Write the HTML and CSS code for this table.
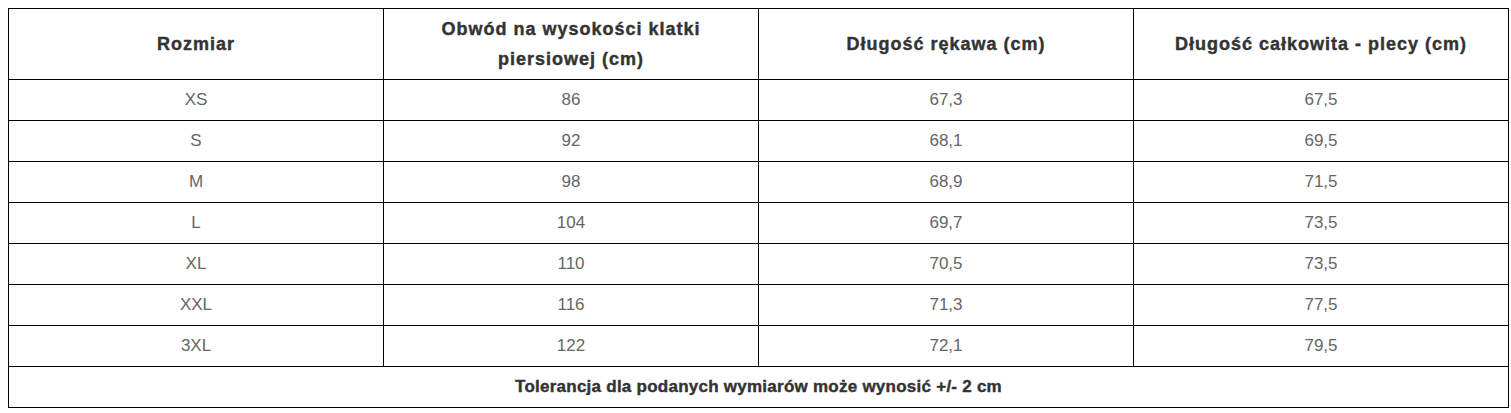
FILE: index.html
```html
<!DOCTYPE html>
<html lang="pl">
<head>
<meta charset="utf-8">
<link rel="stylesheet" href="styles.css">
</head>
<body>
<table class="size-table">
  <thead>
    <tr>
      <th>Rozmiar</th>
      <th>Obwód na wysokości klatki<br>piersiowej (cm)</th>
      <th>Długość rękawa (cm)</th>
      <th>Długość całkowita - plecy (cm)</th>
    </tr>
  </thead>
  <tbody>
    <tr><td>XS</td><td>86</td><td>67,3</td><td>67,5</td></tr>
    <tr><td>S</td><td>92</td><td>68,1</td><td>69,5</td></tr>
    <tr><td>M</td><td>98</td><td>68,9</td><td>71,5</td></tr>
    <tr><td>L</td><td>104</td><td>69,7</td><td>73,5</td></tr>
    <tr><td>XL</td><td>110</td><td>70,5</td><td>73,5</td></tr>
    <tr><td>XXL</td><td>116</td><td>71,3</td><td>77,5</td></tr>
    <tr><td>3XL</td><td>122</td><td>72,1</td><td>79,5</td></tr>
    <tr><td class="note" colspan="4">Tolerancja dla podanych wymiarów może wynosić +/- 2 cm</td></tr>
  </tbody>
</table>
</body>
</html>
```
FILE: styles.css
```css
html, body {
  margin: 0;
  padding: 0;
  background: #fff;
}
body {
  padding: 8px;
  font-family: "Liberation Sans", Arial, sans-serif;
}
.size-table {
  width: 1501px;
  border-collapse: collapse;
  table-layout: fixed;
}
.size-table th,
.size-table td {
  border: 1px solid #000;
  text-align: center;
  vertical-align: middle;
  padding: 0 8px;
}
.size-table th {
  height: 70px;
  font-size: 18px;
  font-weight: 700;
  line-height: 30px;
  letter-spacing: 1px;
  color: #333;
  -webkit-text-stroke: 0.4px #333;
}
.size-table td {
  height: 40px;
  font-size: 17px;
  color: #666;
  line-height: 20px;
}
.size-table td.note {
  font-weight: 700;
  letter-spacing: 0.25px;
  color: #333;
  -webkit-text-stroke: 0.4px #333;
}
```
